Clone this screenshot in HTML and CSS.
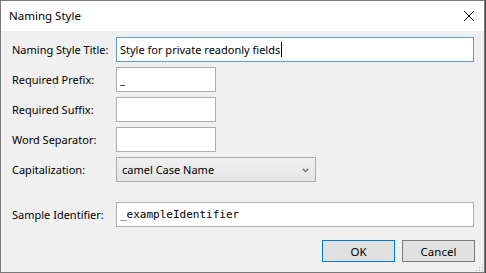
FILE: index.html
```html
<!DOCTYPE html>
<html lang="en">
<head>
    <meta charset="UTF-8">
    <title>Naming Style</title>
    <link rel="stylesheet" href="styles.css">
</head>
<body>
    <div class="window">
        <div class="titlebar">
            <span class="title">Naming Style</span>
            <svg class="close" width="12" height="12" viewBox="0 0 12 12">
                <path d="M1 1 L11 11 M11 1 L1 11" stroke="#000" stroke-width="1" fill="none"/>
            </svg>
        </div>

        <div class="content">
            <div class="form">
                <label>Naming Style Title:</label>
                <div class="field wide focused">Style for private readonly fields<span class="caret"></span></div>

                <label>Required Prefix:</label>
                <div class="field short">_</div>

                <label>Required Suffix:</label>
                <div class="field short"></div>

                <label>Word Separator:</label>
                <div class="field short"></div>

                <label>Capitalization:</label>
                <div class="combo">
                    <span>camel Case Name</span>
                    <svg width="7" height="5" viewBox="0 0 7 5">
                        <path d="M0.8 0.8 L3.5 3.6 L6.2 0.8" stroke="#6a6a6a" stroke-width="1.3" fill="none"/>
                    </svg>
                </div>
            </div>

            <div class="form sample">
                <label>Sample Identifier:</label>
                <div class="field wide mono">_exampleIdentifier</div>
            </div>

            <div class="buttons">
                <button class="default">OK</button>
                <button>Cancel</button>
            </div>
            <div class="grip"></div>
        </div>
    </div>
</body>
</html>
```

FILE: styles.css
```css
* {
    margin: 0;
    padding: 0;
    box-sizing: border-box;
}

body {
    background: #4a4a4a;
    width: 486px;
    height: 273px;
    overflow: hidden;
    font-family: "Noto Sans", "Open Sans", sans-serif;
    font-size: 11px;
    color: #000;
}

.window {
    width: 485px;
    height: 273px;
    border: 1px solid #7a7a7a;
    background: #f0f0f0;
    display: flex;
    flex-direction: column;
}

.titlebar {
    height: 30px;
    background: #fff;
    display: flex;
    align-items: center;
    justify-content: space-between;
    padding: 0 8px 0 8px;
    flex-shrink: 0;
}

.title {
    font-size: 11.5px;
    margin-top: -1px;
}

.close {
    margin-right: 1px;
    margin-top: -1px;
}

.content {
    flex: 1;
    position: relative;
    padding: 6px 9px 0 11px;
}

.form {
    display: grid;
    grid-template-columns: 104px 358px;
    row-gap: 5px;
    align-items: center;
}

.form label {
    line-height: 25px;
    white-space: nowrap;
}

.field {
    height: 25px;
    background: #fff;
    border: 1px solid #adadad;
    padding: 0 3px;
    line-height: 23px;
    white-space: nowrap;
    display: flex;
    align-items: center;
}

.field.short {
    width: 100px;
}

.field.focused {
    border-color: #5e9ad8;
}

.caret {
    display: inline-block;
    width: 1px;
    height: 15px;
    background: #000;
    margin-left: 1px;
}

.field.mono {
    font-family: "DejaVu Sans Mono", "Liberation Mono", monospace;
    font-size: 11px;
}

.combo {
    width: 200px;
    height: 25px;
    border: 1px solid #acacac;
    background: linear-gradient(#f0f0f0, #e5e5e5);
    display: flex;
    align-items: center;
    justify-content: space-between;
    padding: 0 6px 0 5px;
}

.combo svg {
    margin-top: 1px;
}

.sample {
    margin-top: 20px;
}

.buttons {
    display: flex;
    justify-content: flex-end;
    gap: 7px;
    margin-top: 13px;
}

.buttons button {
    width: 73px;
    height: 22px;
    background: #e1e1e1;
    border: 1px solid #7a7a7a;
    font-family: inherit;
    font-size: 11.5px;
    color: #000;
}

.buttons button.default {
    border-color: #0078d7;
}

.grip {
    position: absolute;
    right: 1px;
    bottom: 1px;
    width: 8px;
    height: 8px;
    background: radial-gradient(circle, #b4b4b4 0.8px, transparent 1px) 0 0 / 3px 3px;
    clip-path: polygon(100% 0, 100% 100%, 0 100%);
}
```
